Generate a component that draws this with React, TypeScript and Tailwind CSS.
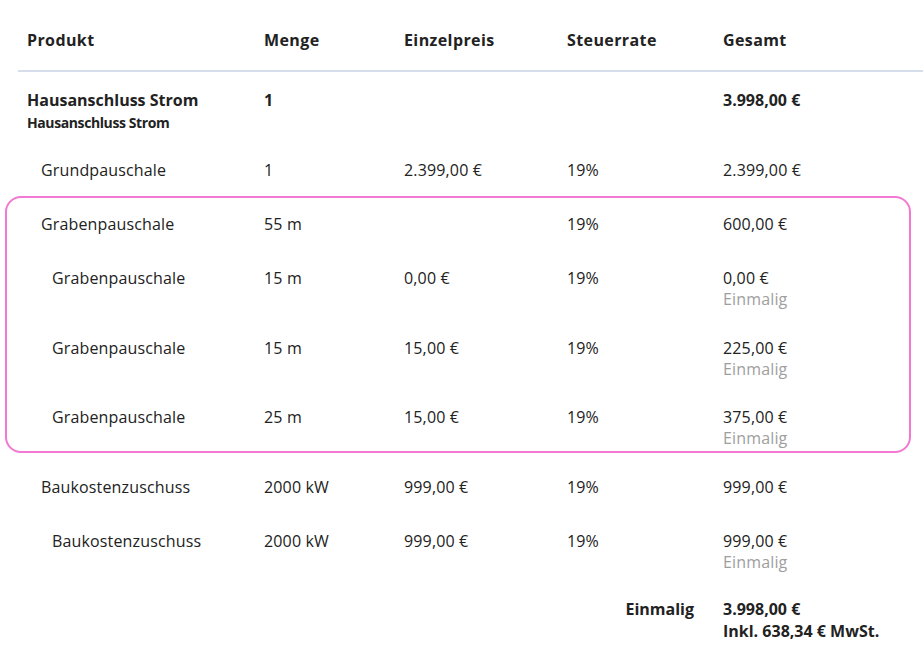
import React from "react"

type Line = {
  name: string
  qty: string
  price?: string
  tax?: string
  total: string
  level: 1 | 2
  once?: boolean
}

const lines: Line[] = [
  { name: "Grundpauschale", qty: "1", price: "2.399,00 €", tax: "19%", total: "2.399,00 €", level: 1 },
  { name: "Grabenpauschale", qty: "55 m", tax: "19%", total: "600,00 €", level: 1 },
  { name: "Grabenpauschale", qty: "15 m", price: "0,00 €", tax: "19%", total: "0,00 €", level: 2, once: true },
  { name: "Grabenpauschale", qty: "15 m", price: "15,00 €", tax: "19%", total: "225,00 €", level: 2, once: true },
  { name: "Grabenpauschale", qty: "25 m", price: "15,00 €", tax: "19%", total: "375,00 €", level: 2, once: true },
  { name: "Baukostenzuschuss", qty: "2000 kW", price: "999,00 €", tax: "19%", total: "999,00 €", level: 1 },
  { name: "Baukostenzuschuss", qty: "2000 kW", price: "999,00 €", tax: "19%", total: "999,00 €", level: 2, once: true },
]

const cols = "grid grid-cols-[237px_140px_163px_156px_1fr] pl-[9px]"

function Row({ line }: { line: Line }) {
  return (
    <div className={`${cols} py-[16px] text-[16px] leading-[22px] tracking-[0.15px] text-[#222]`}>
      <div className={line.level === 1 ? "pl-[14px]" : "pl-[25px]"}>{line.name}</div>
      <div>{line.qty}</div>
      <div>{line.price ?? ""}</div>
      <div>{line.tax ?? ""}</div>
      <div>
        <div>{line.total}</div>
        {line.once && <div className="-mb-[5.5px] leading-[21px] text-[#9e9e9e]">Einmalig</div>}
      </div>
    </div>
  )
}

export default function App() {
  return (
    <div className="relative min-h-[657px] w-[923px] overflow-hidden bg-white pl-[18px] font-['Open_Sans',sans-serif]">
      {/* header */}
      <div
        className={`${cols} border-b-2 border-[#d5deea] pt-[29px] pb-[19px] text-[16px] font-bold leading-[22px] tracking-[0.4px] text-[#222]`}
      >
        <div>Produkt</div>
        <div>Menge</div>
        <div>Einzelpreis</div>
        <div>Steuerrate</div>
        <div>Gesamt</div>
      </div>

      {/* product */}
      <div className={`${cols} pt-[17px] pb-[16px] text-[16px] font-bold leading-[22px] text-[#222]`}>
        <div>
          <div>Hausanschluss Strom</div>
          <div className="mt-[3px] -mb-[5px] text-[14px] leading-[18px] tracking-[-0.4px]">Hausanschluss Strom</div>
        </div>
        <div>1</div>
        <div />
        <div />
        <div>3.998,00 €</div>
      </div>

      {lines.map((l, i) => (
        <Row key={i} line={l} />
      ))}

      {/* sum */}
      <div className={`${cols} pt-[15px] text-[16px] font-bold leading-[22px] text-[#222]`}>
        <div />
        <div />
        <div />
        <div className="pr-[29px] text-right">Einmalig</div>
        <div>
          <div>3.998,00 €</div>
          <div className="leading-[23px]">Inkl. 638,34 € MwSt.</div>
        </div>
      </div>

      {/* highlight */}
      <div className="pointer-events-none absolute left-[5px] top-[196px] h-[257px] w-[906px] rounded-[16px] border-[2.5px] border-[#f378d3]" />
    </div>
  )
}
